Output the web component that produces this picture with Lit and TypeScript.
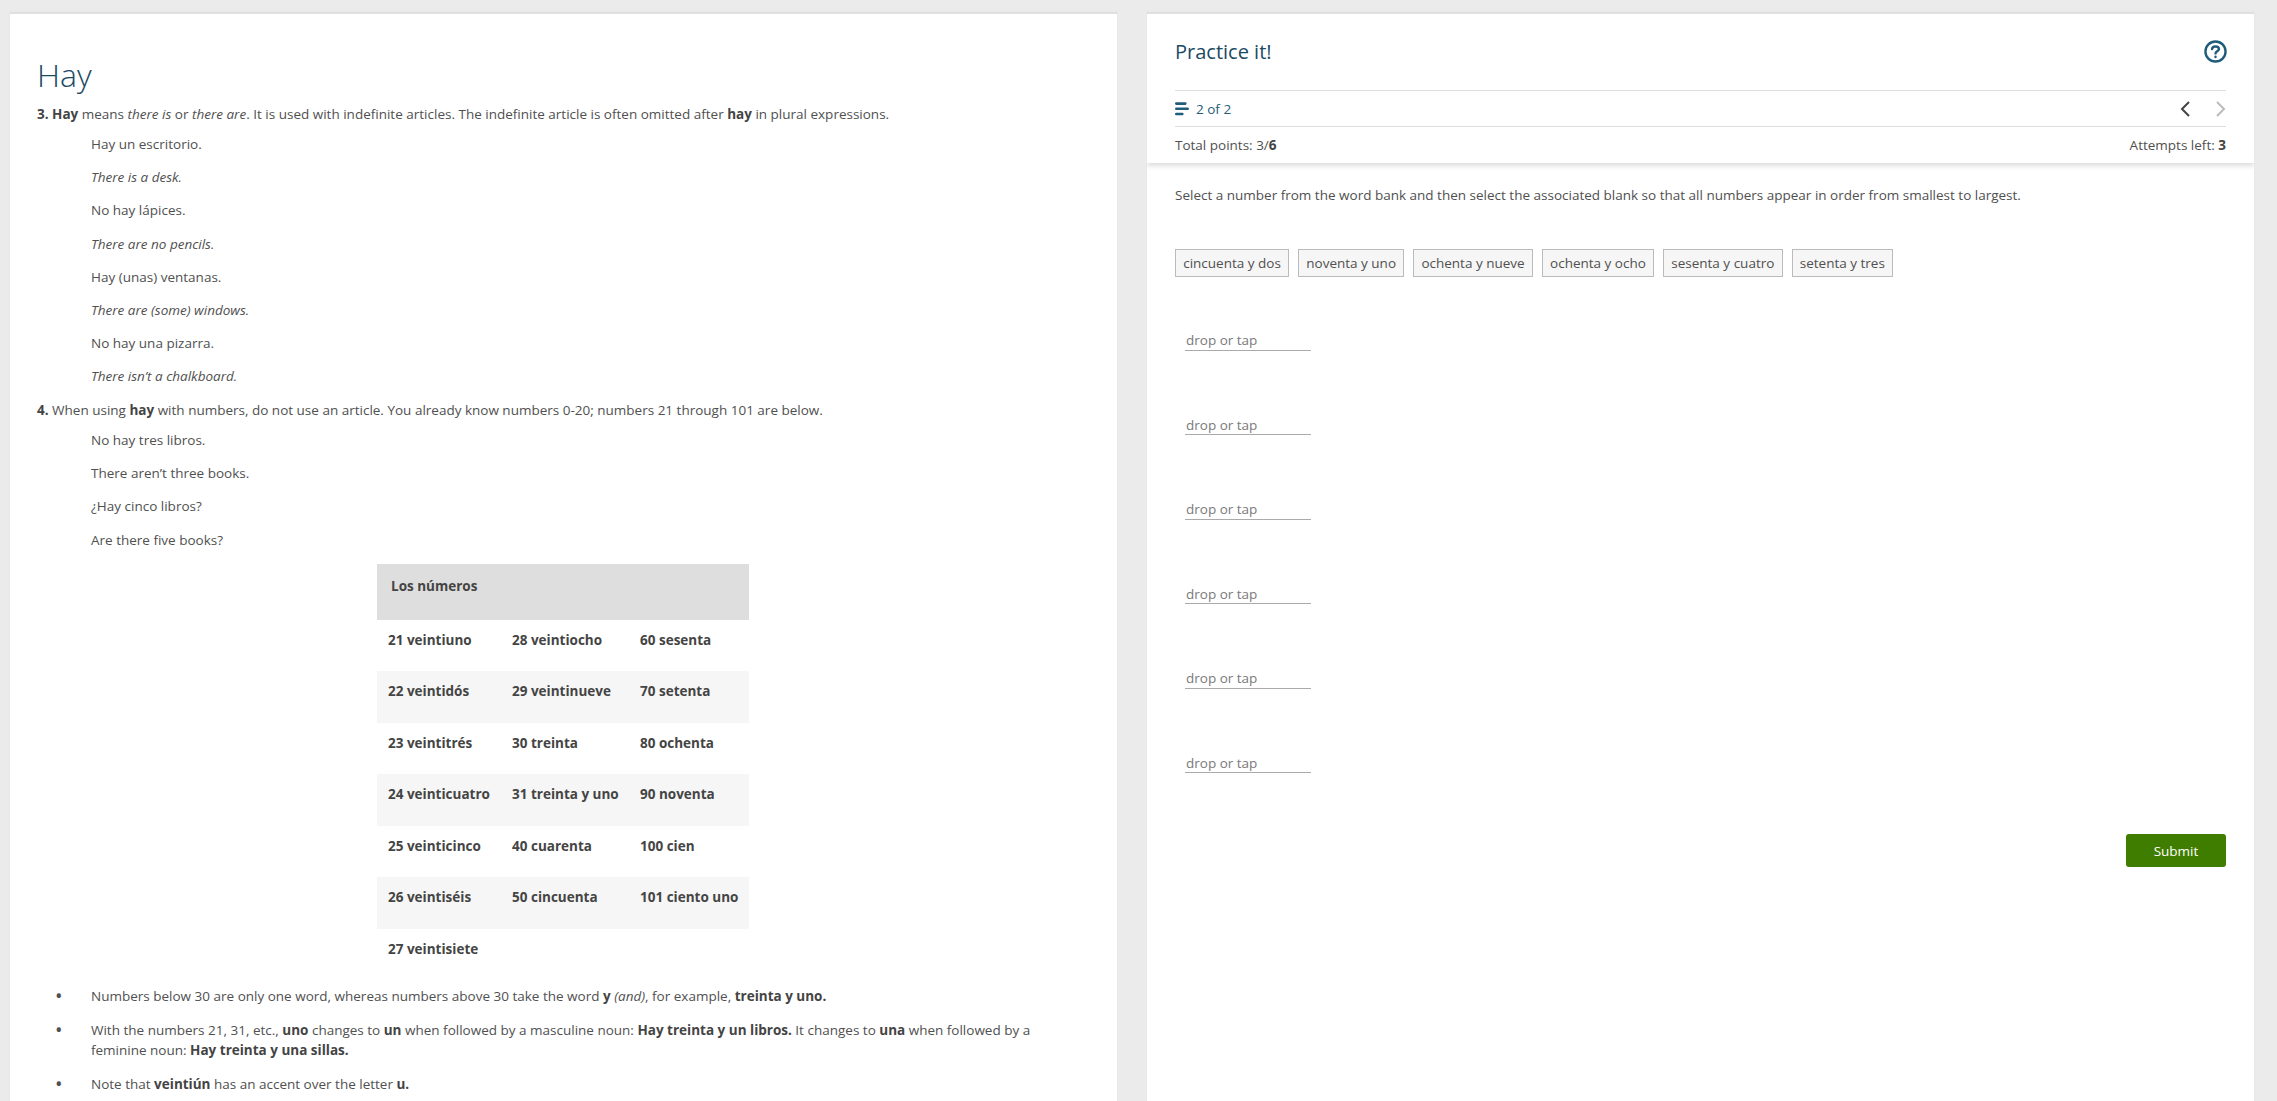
import { LitElement, html, css } from "lit";
import { customElement } from "lit/decorators.js";

const rows = [
  ["21 veintiuno", "28 veintiocho", "60 sesenta"],
  ["22 veintidós", "29 veintinueve", "70 setenta"],
  ["23 veintitrés", "30 treinta", "80 ochenta"],
  ["24 veinticuatro", "31 treinta y uno", "90 noventa"],
  ["25 veinticinco", "40 cuarenta", "100 cien"],
  ["26 veintiséis", "50 cincuenta", "101 ciento uno"],
  ["27 veintisiete", "", ""],
];
const chips = ["cincuenta y dos", "noventa y uno", "ochenta y nueve", "ochenta y ocho", "sesenta y cuatro", "setenta y tres"];

@customElement("app-root")
export class AppRoot extends LitElement {
  static styles = css`
    :host { display: block; height: 1101px; overflow: hidden; background: #ebebeb; font-family: "Open Sans", sans-serif; font-size: 13.5px; line-height: 20px; color: #505050; }
    .page { display: flex; gap: 30px; padding: 12px 23px 0 10px; height: 1101px; box-sizing: border-box; }
    .panel { background: #fff; border-top: 2px solid #e0e0e0; box-shadow: 0 0 1px #ddd; box-sizing: border-box; overflow: hidden; }
    .left { width: 1107px; padding: 39px 27px 0; flex: none; }
    .right { width: 1107px; flex: none; display: flex; flex-direction: column; }
    h1 { margin: 0 0 7px; font-size: 32px; font-weight: 300; line-height: 44px; color: #1b4a63; }
    p { margin: 0; }
    .lead { margin-bottom: 10px; }
    .ind { padding-left: 54px; margin-bottom: 13.2px; }
    .last { margin-bottom: 13.8px; }
    table { border-collapse: collapse; table-layout: fixed; margin: 14px 0 0 340px; width: 372px; font-weight: 700; color: #444; }
    th { background: #dedede; text-align: left; height: 56px; vertical-align: top; padding: 12px 14px; font-weight: 700; box-sizing: border-box; }
    td { height: 51.5px; vertical-align: top; padding: 10px 11px; box-sizing: border-box; white-space: nowrap; }
    td:nth-child(3) { padding-left: 12px; padding-right: 0; }
    tr.alt td { background: #f6f6f6; }
    ul { margin: 6px 0 0; padding: 0; list-style: none; }
    li { margin-bottom: 14px; display: flex; }
    li span { max-width: 965px; }
    li::before { content: "•"; flex: none; width: 36px; margin-left: 18px; font-size: 20px; }
    b { color: #444; }
    .head { padding: 0 28px; box-shadow: 0 3px 5px rgba(0,0,0,.14); position: relative; }
    .title { display: flex; justify-content: space-between; align-items: center; height: 76px; border-bottom: 1px solid #ddd; }
    .title h2 { margin: 0; font-size: 20px; font-weight: 400; line-height: 28px; color: #1b4a63; }
    .help { margin: -2px -1px 0 0; }
    .count { display: flex; justify-content: space-between; align-items: center; height: 35px; border-bottom: 1px solid #ddd; }
    .of { display: flex; align-items: center; gap: 7px; color: #1f5c7c; }
    .nav { display: flex; gap: 26px; align-items: center; margin-right: 0; }
    .stats { display: flex; justify-content: space-between; align-items: center; height: 36px; }
    .body { padding: 22px 28px 0; flex: 1; }
    .chips { display: flex; gap: 9px; margin-top: 44px; }
    .chip { border: 1px solid #bbb; background: #f6f6f6; padding: 3px 7.2px; height: 28px; box-sizing: border-box; }
    .blanks { margin: 53px 0 0 10px; display: flex; flex-direction: column; gap: 64px; }
    .blank { width: 126px; border-bottom: 1px solid #aaa; color: #7a7a7a; padding-left: 1px; box-sizing: border-box; height: 20.5px; }
    .actions { display: flex; justify-content: flex-end; margin-top: 61px; }
    button { width: 100px; height: 33px; border: 0; border-radius: 3px; background: #3f7d00; color: #fff; font: 400 13.5px "Open Sans", sans-serif; padding: 0; }
    svg { display: block; }
  `;

  render() {
    return html`<div class="page">
      <section class="panel left">
        <h1>Hay</h1>
        <p class="lead"><b>3. Hay</b> means <i>there is</i> or <i>there are</i>. It is used with indefinite articles. The indefinite article is often omitted after <b>hay</b> in plural expressions.</p>
        <p class="ind">Hay un escritorio.</p>
        <p class="ind"><i>There is a desk.</i></p>
        <p class="ind">No hay lápices.</p>
        <p class="ind"><i>There are no pencils.</i></p>
        <p class="ind">Hay (unas) ventanas.</p>
        <p class="ind"><i>There are (some) windows.</i></p>
        <p class="ind">No hay una pizarra.</p>
        <p class="ind last"><i>There isn’t a chalkboard.</i></p>
        <p class="lead"><b>4.</b> When using <b>hay</b> with numbers, do not use an article. You already know numbers 0-20; numbers 21 through 101 are below.</p>
        <p class="ind">No hay tres libros.</p>
        <p class="ind">There aren’t three books.</p>
        <p class="ind">¿Hay cinco libros?</p>
        <p class="ind">Are there five books?</p>
        <table>
          <colgroup><col style="width:124px" /><col style="width:127px" /><col style="width:121px" /></colgroup>
          <tr><th colspan="3">Los números</th></tr>
          ${rows.map((r, i) => html`<tr class=${i % 2 ? "alt" : ""}>${r.map((c) => html`<td>${c}</td>`)}</tr>`)}
        </table>
        <ul>
          <li><span>Numbers below 30 are only one word, whereas numbers above 30 take the word <b>y</b> <i>(and)</i>, for example, <b>treinta y uno.</b></span></li>
          <li><span>With the numbers 21, 31, etc., <b>uno</b> changes to <b>un</b> when followed by a masculine noun: <b>Hay treinta y un libros.</b> It changes to <b>una</b> when followed by a feminine noun: <b>Hay treinta y una sillas.</b></span></li>
          <li><span>Note that <b>veintiún</b> has an accent over the letter <b>u.</b></span></li>
        </ul>
      </section>
      <section class="panel right">
        <div class="head">
          <div class="title">
            <h2>Practice it!</h2>
            <svg class="help" width="23" height="23" viewBox="0 0 24 24" fill="none" stroke="#1f5c7c" stroke-width="2.5" stroke-linecap="round"><circle cx="12" cy="12" r="10.5"/><path d="M8.4 9.4C8.6 7.6 10.2 6.8 12 6.8c2.1 0 3.6 1 3.6 2.7 0 2.2-3.6 2.3-3.6 4.5"/><path d="M12 17.5v.2"/></svg>
          </div>
          <div class="count">
            <div class="of">
              <svg width="14" height="14" viewBox="0 0 14 14" fill="none" stroke="#1f5c7c" stroke-width="2.6" stroke-linecap="round"><path d="M1.3 1.6h9M1.3 6.8h11.4M1.3 12h6"/></svg>
              <span>2 of 2</span>
            </div>
            <div class="nav">
              <svg width="10" height="16" viewBox="0 0 10 16" fill="none" stroke="#444" stroke-width="2"><path d="M9 1 2 8l7 7"/></svg>
              <svg width="10" height="16" viewBox="0 0 10 16" fill="none" stroke="#bbb" stroke-width="2"><path d="M1 1l7 7-7 7"/></svg>
            </div>
          </div>
          <div class="stats"><span>Total points: 3/<b>6</b></span><span>Attempts left: <b>3</b></span></div>
        </div>
        <div class="body">
          <p>Select a number from the word bank and then select the associated blank so that all numbers appear in order from smallest to largest.</p>
          <div class="chips">${chips.map((c) => html`<div class="chip">${c}</div>`)}</div>
          <div class="blanks">${[0, 1, 2, 3, 4, 5].map(() => html`<div class="blank">drop or tap</div>`)}</div>
          <div class="actions"><button>Submit</button></div>
        </div>
      </section>
    </div>`;
  }
}
